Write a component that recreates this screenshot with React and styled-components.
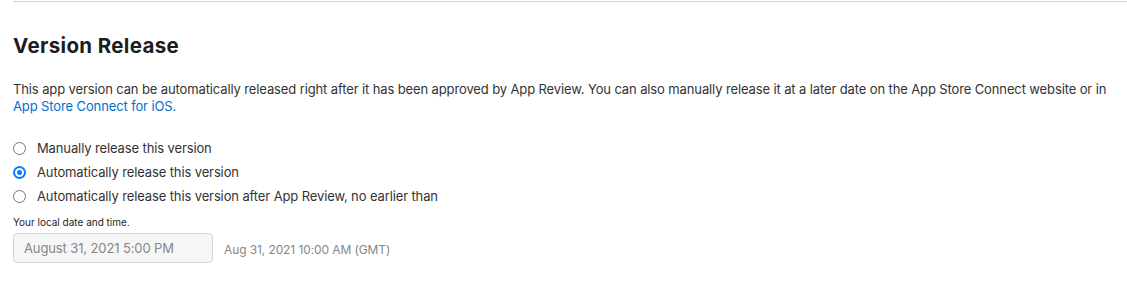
import React from "react";
import styled, { createGlobalStyle } from "styled-components";

const Global = createGlobalStyle`
  html, body { margin: 0; padding: 0; background: #fff; }
  body { font-family: Inter, "Noto Sans", "Liberation Sans", sans-serif; color: #1d1d1f; -webkit-font-smoothing: antialiased; }
`;

const Section = styled.section`
  margin-left: 13px;
  border-top: 1px solid #d2d2d7;
  margin-top: 1px;
  padding: 31px 0 0 0;
`;

const Title = styled.h2`
  margin: 0;
  font-size: 20.5px;
  line-height: 26px;
  font-weight: 700;
  letter-spacing: 0.35px;
  color: #1d1d1f;
`;

const Description = styled.p`
  margin: 22px 0 0 0;
  font-size: 13px;
  line-height: 17px;
  letter-spacing: -0.12px;
  color: #333;
`;

const Link = styled.a`
  color: #0070c9;
  text-decoration: none;
`;

const RadioList = styled.div`
  margin-top: 25px;
  display: flex;
  flex-direction: column;
  gap: 8px;
`;

const RadioRow = styled.label`
  display: flex;
  align-items: center;
  gap: 11px;
  height: 16px;
  font-size: 13px;
  letter-spacing: -0.12px;
  color: #333;
`;

const RadioDot = styled.span`
  box-sizing: border-box;
  width: 13px;
  height: 13px;
  border-radius: 50%;
  border: ${(p) => (p.$checked ? "2px solid #0a7aff" : "1px solid #767676")};
  background: #fff;
  display: flex;
  align-items: center;
  justify-content: center;
  &::after {
    content: "";
    width: 5px;
    height: 5px;
    border-radius: 50%;
    background: #0a7aff;
    display: ${(p) => (p.$checked ? "block" : "none")};
  }
`;

const Hint = styled.div`
  margin-top: 11px;
  font-size: 10px;
  line-height: 14px;
  color: #1d1d1f;
`;

const DateRow = styled.div`
  margin-top: 4px;
  display: flex;
  align-items: center;
  gap: 11px;
`;

const DateInput = styled.div`
  box-sizing: border-box;
  width: 200px;
  height: 30px;
  padding: 0 10px;
  display: flex;
  align-items: center;
  background: #f6f6f6;
  border: 1px solid #d6d6d6;
  border-radius: 4px;
  font-size: 13px;
  letter-spacing: -0.12px;
  color: #86868b;
`;

const GmtText = styled.span`
  font-size: 12px;
  letter-spacing: -0.1px;
  color: #86868b;
  margin-top: 2px;
`;

const options = [
  { label: "Manually release this version", checked: false },
  { label: "Automatically release this version", checked: true },
  { label: "Automatically release this version after App Review, no earlier than", checked: false },
];

export default function App() {
  return (
    <>
      <Global />
      <Section>
        <Title>Version Release</Title>
        <Description>
          This app version can be automatically released right after it has been approved by App Review. You can also manually release it at a later date on the App Store Connect website or in{" "}
          <Link href="#">App Store Connect for iOS.</Link>
        </Description>
        <RadioList>
          {options.map((o) => (
            <RadioRow key={o.label}>
              <RadioDot $checked={o.checked} />
              {o.label}
            </RadioRow>
          ))}
        </RadioList>
        <Hint>Your local date and time.</Hint>
        <DateRow>
          <DateInput>August 31, 2021 5:00 PM</DateInput>
          <GmtText>Aug 31, 2021 10:00 AM (GMT)</GmtText>
        </DateRow>
      </Section>
    </>
  );
}
